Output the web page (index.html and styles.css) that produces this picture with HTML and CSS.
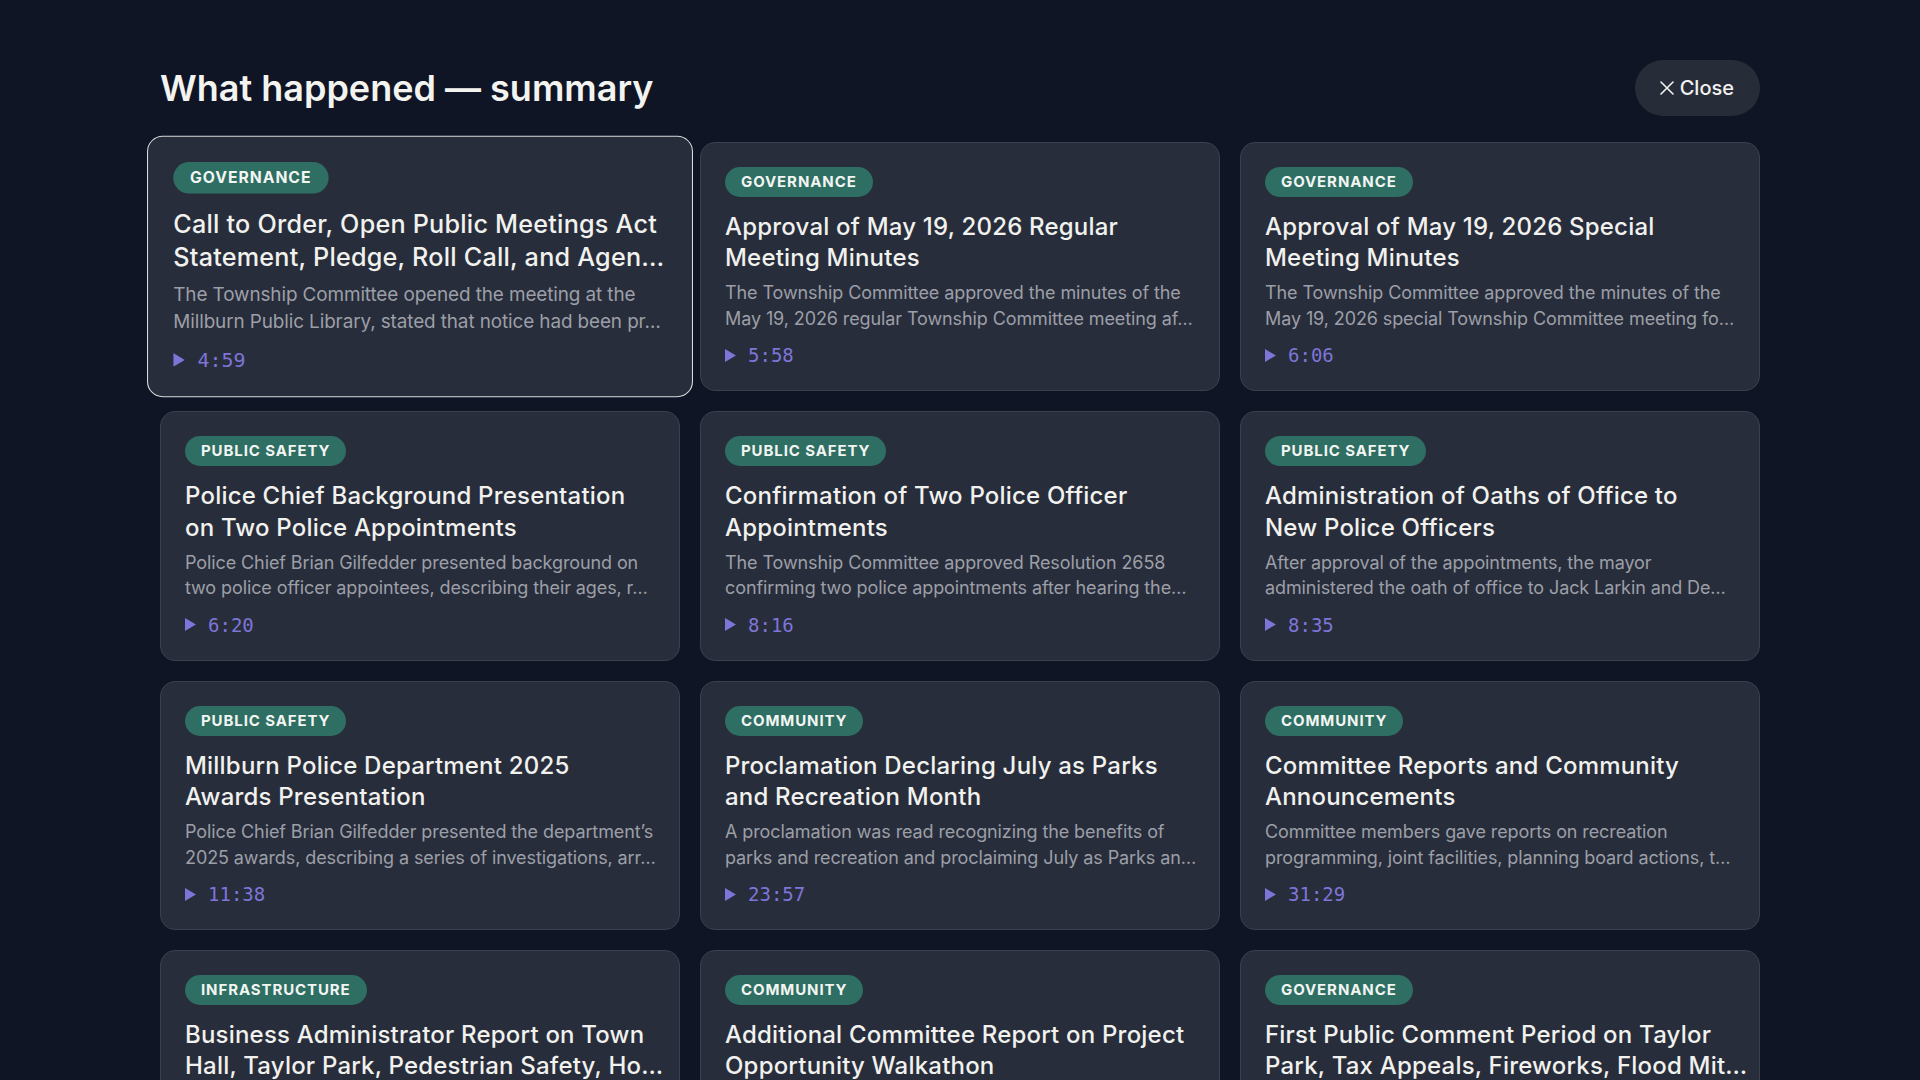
FILE: index.html
```html
<!DOCTYPE html>
<html lang="en">
<head>
    <meta charset="UTF-8">
    <meta name="viewport" content="width=device-width, initial-scale=1.0">
    <title>What happened — summary</title>
    <link rel="stylesheet" href="styles.css">
</head>
<body>
    <div class="page">
        <div class="header">
            <h1>What happened — summary</h1>
            <button class="close-btn">
                <svg class="close-icon" width="14" height="14" viewBox="0 0 14 14"><path d="M1 1 L13 13 M13 1 L1 13" stroke="currentColor" stroke-width="1.6" stroke-linecap="round"/></svg>
                Close
            </button>
        </div>

        <div class="grid">
            <div class="card is-active">
                <span class="tag">Governance</span>
                <div class="card-title split">
                    <span class="line">Call to Order, Open Public Meetings Act</span>
                    <span class="line">Statement, Pledge, Roll Call, and Agen…</span>
                </div>
                <div class="card-summary split">
                    <span class="line">The Township Committee opened the meeting at the</span>
                    <span class="line">Millburn Public Library, stated that notice had been pr…</span>
                </div>
                <div class="jump"><svg class="play" width="11" height="13" viewBox="0 0 11 13"><polygon points="0,0 11,6.5 0,13" fill="currentColor"/></svg>4:59</div>
            </div>

            <div class="card">
                <span class="tag">Governance</span>
                <div class="card-title">Approval of May 19, 2026 Regular Meeting Minutes</div>
                <div class="card-summary split">
                    <span class="line">The Township Committee approved the minutes of the</span>
                    <span class="line">May 19, 2026 regular Township Committee meeting af…</span>
                </div>
                <div class="jump"><svg class="play" width="11" height="13" viewBox="0 0 11 13"><polygon points="0,0 11,6.5 0,13" fill="currentColor"/></svg>5:58</div>
            </div>

            <div class="card">
                <span class="tag">Governance</span>
                <div class="card-title">Approval of May 19, 2026 Special Meeting Minutes</div>
                <div class="card-summary split">
                    <span class="line">The Township Committee approved the minutes of the</span>
                    <span class="line">May 19, 2026 special Township Committee meeting fo…</span>
                </div>
                <div class="jump"><svg class="play" width="11" height="13" viewBox="0 0 11 13"><polygon points="0,0 11,6.5 0,13" fill="currentColor"/></svg>6:06</div>
            </div>

            <div class="card">
                <span class="tag">Public Safety</span>
                <div class="card-title">Police Chief Background Presentation on Two Police Appointments</div>
                <div class="card-summary split">
                    <span class="line">Police Chief Brian Gilfedder presented background on</span>
                    <span class="line">two police officer appointees, describing their ages, r…</span>
                </div>
                <div class="jump"><svg class="play" width="11" height="13" viewBox="0 0 11 13"><polygon points="0,0 11,6.5 0,13" fill="currentColor"/></svg>6:20</div>
            </div>

            <div class="card">
                <span class="tag">Public Safety</span>
                <div class="card-title">Confirmation of Two Police Officer Appointments</div>
                <div class="card-summary split">
                    <span class="line">The Township Committee approved Resolution 2658</span>
                    <span class="line">confirming two police appointments after hearing the…</span>
                </div>
                <div class="jump"><svg class="play" width="11" height="13" viewBox="0 0 11 13"><polygon points="0,0 11,6.5 0,13" fill="currentColor"/></svg>8:16</div>
            </div>

            <div class="card">
                <span class="tag">Public Safety</span>
                <div class="card-title">Administration of Oaths of Office to New Police Officers</div>
                <div class="card-summary split">
                    <span class="line">After approval of the appointments, the mayor</span>
                    <span class="line">administered the oath of office to Jack Larkin and De…</span>
                </div>
                <div class="jump"><svg class="play" width="11" height="13" viewBox="0 0 11 13"><polygon points="0,0 11,6.5 0,13" fill="currentColor"/></svg>8:35</div>
            </div>

            <div class="card">
                <span class="tag">Public Safety</span>
                <div class="card-title">Millburn Police Department 2025 Awards Presentation</div>
                <div class="card-summary split">
                    <span class="line">Police Chief Brian Gilfedder presented the department’s</span>
                    <span class="line">2025 awards, describing a series of investigations, arr…</span>
                </div>
                <div class="jump"><svg class="play" width="11" height="13" viewBox="0 0 11 13"><polygon points="0,0 11,6.5 0,13" fill="currentColor"/></svg>11:38</div>
            </div>

            <div class="card">
                <span class="tag">Community</span>
                <div class="card-title">Proclamation Declaring July as Parks and Recreation Month</div>
                <div class="card-summary split">
                    <span class="line">A proclamation was read recognizing the benefits of</span>
                    <span class="line">parks and recreation and proclaiming July as Parks an…</span>
                </div>
                <div class="jump"><svg class="play" width="11" height="13" viewBox="0 0 11 13"><polygon points="0,0 11,6.5 0,13" fill="currentColor"/></svg>23:57</div>
            </div>

            <div class="card">
                <span class="tag">Community</span>
                <div class="card-title">Committee Reports and Community Announcements</div>
                <div class="card-summary split">
                    <span class="line">Committee members gave reports on recreation</span>
                    <span class="line">programming, joint facilities, planning board actions, t…</span>
                </div>
                <div class="jump"><svg class="play" width="11" height="13" viewBox="0 0 11 13"><polygon points="0,0 11,6.5 0,13" fill="currentColor"/></svg>31:29</div>
            </div>

            <div class="card">
                <span class="tag">Infrastructure</span>
                <div class="card-title split">
                    <span class="line">Business Administrator Report on Town</span>
                    <span class="line">Hall, Taylor Park, Pedestrian Safety, Ho…</span>
                </div>
                <div class="card-summary">The business administrator updated the committee on the Town Hall renovation, Taylor Park improvements and the paving schedule.</div>
                <div class="jump"><svg class="play" width="11" height="13" viewBox="0 0 11 13"><polygon points="0,0 11,6.5 0,13" fill="currentColor"/></svg>44:12</div>
            </div>

            <div class="card">
                <span class="tag">Community</span>
                <div class="card-title">Additional Committee Report on Project Opportunity Walkathon</div>
                <div class="card-summary">A committee member described the upcoming Project Opportunity walkathon and encouraged residents to register and volunteer.</div>
                <div class="jump"><svg class="play" width="11" height="13" viewBox="0 0 11 13"><polygon points="0,0 11,6.5 0,13" fill="currentColor"/></svg>52:40</div>
            </div>

            <div class="card">
                <span class="tag">Governance</span>
                <div class="card-title split">
                    <span class="line">First Public Comment Period on Taylor</span>
                    <span class="line">Park, Tax Appeals, Fireworks, Flood Mit…</span>
                </div>
                <div class="card-summary">Residents spoke during the first public comment period about Taylor Park, tax appeals, the fireworks display and flood mitigation.</div>
                <div class="jump"><svg class="play" width="11" height="13" viewBox="0 0 11 13"><polygon points="0,0 11,6.5 0,13" fill="currentColor"/></svg>55:03</div>
            </div>
        </div>
    </div>
</body>
</html>
```

FILE: styles.css
```css
body {
    margin: 0;
    background: #0f1525;
    color: #f1f1ee;
    font-family: Inter, 'Noto Sans', sans-serif;
}
.page {
    max-width: 1600px;
    margin: 0 auto;
    padding: 60px 0;
}
.header {
    display: flex;
    align-items: center;
    justify-content: space-between;
    margin-bottom: 26px;
}
h1 {
    margin: 0;
    font-size: 36px;
    font-weight: 600;
    letter-spacing: 0;
    color: #f3f3ef;
}
.close-btn {
    display: flex;
    align-items: center;
    gap: 6px;
    height: 56px;
    padding: 0 26px 0 25px;
    border: none;
    border-radius: 28px;
    background: #272c39;
    color: #f1f1ee;
    font-family: Inter, sans-serif;
    font-size: 20px;
    font-weight: 500;
    cursor: pointer;
}
.close-icon {
    display: block;
}
.grid {
    display: grid;
    grid-template-columns: repeat(3, 1fr);
    gap: 20px;
}
.card {
    background: #282d3b;
    border: 1px solid #3a404e;
    border-radius: 15px;
    padding: 24px;
    display: flex;
    flex-direction: column;
    align-items: flex-start;
    min-width: 0;
}
.card.is-active {
    transform: scale(1.05);
    border-color: #d9dadc;
    position: relative;
    z-index: 1;
}
.tag {
    display: inline-block;
    background: #2e6e63;
    color: #f2f5f2;
    font-size: 15px;
    font-weight: 700;
    letter-spacing: 0.9px;
    text-transform: uppercase;
    line-height: 18px;
    padding: 6px 16px;
    border-radius: 15px;
}
.card-title {
    margin-top: 14px;
    font-size: 24px;
    font-weight: 500;
    line-height: 1.3;
    letter-spacing: 0.2px;
    color: #f1f1ee;
    display: -webkit-box;
    -webkit-line-clamp: 2;
    -webkit-box-orient: vertical;
    overflow: hidden;
}
.card-summary {
    margin-top: 7px;
    font-size: 18px;
    line-height: 25.5px;
    letter-spacing: -0.1px;
    color: #9c9fa7;
    display: -webkit-box;
    -webkit-line-clamp: 2;
    -webkit-box-orient: vertical;
    overflow: hidden;
}
.split {
    display: block;
    overflow: visible;
}
.line {
    display: block;
    white-space: nowrap;
}
.jump {
    margin-top: 13px;
    display: flex;
    align-items: center;
    gap: 12px;
    font-family: 'DejaVu Sans Mono', 'Liberation Mono', monospace;
    font-size: 19px;
    color: #7d75d8;
}
.play {
    display: block;
}
```
